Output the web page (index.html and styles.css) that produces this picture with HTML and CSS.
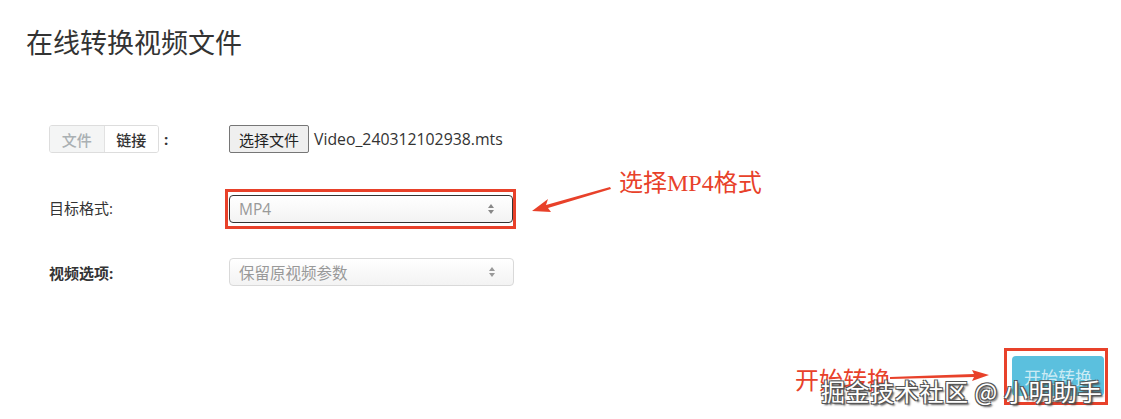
FILE: index.html
```html
<!DOCTYPE html>
<html lang="zh-CN">
<head>
  <meta charset="UTF-8">
  <title>在线转换视频文件</title>
  <link rel="stylesheet" href="styles.css">
</head>
<body>
  <div class="page">
    <h1 class="title">在线转换视频文件</h1>

    <div class="form">
      <div class="row row-source">
        <div class="label">
          <div class="tabs">
            <span class="tab tab-off">文件</span>
            <span class="tab tab-on">链接</span>
          </div>
          <span class="colon">:</span>
        </div>
        <div class="field">
          <span class="file-btn">选择文件</span>
          <span class="file-name">Video_240312102938.mts</span>
        </div>
      </div>

      <div class="row row-format">
        <div class="label">目标格式:</div>
        <div class="mark-box">
          <div class="select select-active">
            <span>MP4</span>
            <svg class="caret" width="8" height="12" viewBox="0 0 8 12"><path d="M4 1 L7 5 H1 Z M4 11 L7 7 H1 Z" fill="#888"/></svg>
          </div>
        </div>
      </div>

      <div class="row row-video">
        <div class="label label-bold">视频选项:</div>
        <div class="select">
          <span>保留原视频参数</span>
          <svg class="caret" width="8" height="12" viewBox="0 0 8 12"><path d="M4 1 L7 5 H1 Z M4 11 L7 7 H1 Z" fill="#999"/></svg>
        </div>
      </div>
    </div>

    <div class="actions">
      <div class="mark-box mark-btn">
        <button class="start-btn">开始转换</button>
      </div>
    </div>

    <!-- 标注层 -->
    <div class="note note-format">选择MP4格式</div>
    <svg class="arrow arrow-format" width="82" height="30" viewBox="0 0 82 30">
      <path d="M78 2 L14 20 L16 14 L0 26 L19 27 L16 23 L79 4 Z" fill="#e8412a"/>
    </svg>
    <div class="note note-start">开始转换</div>
    <svg class="arrow arrow-start" width="100" height="16" viewBox="0 0 100 16">
      <path d="M0 9 L84 6 L82 2 L99 7 L82 13 L84 9 L0 11 Z" fill="#e8412a"/>
    </svg>
    <div class="watermark">掘金技术社区 @ 小明助手</div>
  </div>
</body>
</html>
```

FILE: styles.css
```css
body { margin: 0; background: #fff; color: #333; font-family: 'Open Sans', 'Noto Sans CJK SC', sans-serif; }
.page { position: relative; width: 1121px; height: 419px; overflow: hidden; }
.title { margin: 0; padding: 25px 0 0 26px; font-size: 27px; line-height: 36px; font-weight: 400; color: #333; }

.form { padding: 64px 0 0 49px; }
.row { display: flex; align-items: center; }
.row .label { width: 180px; box-sizing: border-box; font-size: 15px; color: #333; display: flex; align-items: center; }
.row .label-bold { font-weight: 700; }
.row-format { margin-top: 36px; margin-left: -4px; }
.row-format .label { width: 180px; padding-left: 4px; margin-top: -3px; }
.row-video { margin-top: 29px; }

.tabs { display: flex; height: 28px; border: 1px solid #ddd; border-radius: 3px; box-sizing: border-box; width: 110px; overflow: hidden; }
.tab { flex: 1; display: flex; align-items: center; justify-content: center; font-size: 15px; font-weight: 500; }
.tab-off { background: #f4f5f5; color: #aab0b3; border-right: 1px solid #e2e2e2; }
.tab-on { background: #fff; color: #333; }
.colon { margin-left: 5px; font-weight: 700; }

.field { display: flex; align-items: center; }
.file-btn { height: 28px; width: 80px; box-sizing: border-box; border: 1px solid #767676; border-radius: 2px; background: #efefef; font-size: 15px; display: flex; align-items: center; justify-content: center; color: #222; }
.file-name { margin-left: 5px; font-size: 15.8px; color: #333; }

.mark-box { border: 3px solid #e8412a; padding: 3px 0 3px 1px; }
.select { width: 285px; height: 28px; box-sizing: border-box; border: 1px solid #d9d9d9; border-radius: 4px; background: linear-gradient(#fff, #f3f3f3); display: flex; align-items: center; justify-content: space-between; padding: 0 17px 0 9px; font-size: 15.5px; color: #999; }
.select-active { width: 284px; border-color: #333; }
.caret { display: block; }

.actions { display: flex; justify-content: flex-end; padding: 62px 13px 0 0; }
.mark-btn { padding: 5px 1px 6px 5px; }
.start-btn { width: 92px; height: 40px; border: none; border-radius: 4px; background: #5bc0de; color: rgba(255, 255, 255, 0.7); font-family: 'Noto Sans CJK SC', sans-serif; font-size: 17px; }

.note { position: absolute; color: #e8412a; white-space: nowrap; }
.note-format { left: 619px; top: 168px; font-family: 'Liberation Serif', 'Noto Sans CJK SC', serif; font-size: 24px; line-height: 30px; }
.note-start { left: 795px; top: 363px; font-family: 'Noto Sans CJK SC', sans-serif; font-size: 24px; line-height: 32px; }
.arrow { position: absolute; }
.arrow-format { left: 532px; top: 185px; }
.arrow-start { left: 890px; top: 368px; }

.watermark { position: absolute; left: 821px; top: 375px; font-family: 'Noto Sans CJK SC', sans-serif; font-size: 24px; line-height: 32px; letter-spacing: 0.6px; color: #fff; white-space: nowrap; text-shadow: -1px -1px 0 #555, 1px -1px 0 #555, -1px 1px 0 #555, 1px 1px 0 #555, 2px 2px 2px #444; }
```
